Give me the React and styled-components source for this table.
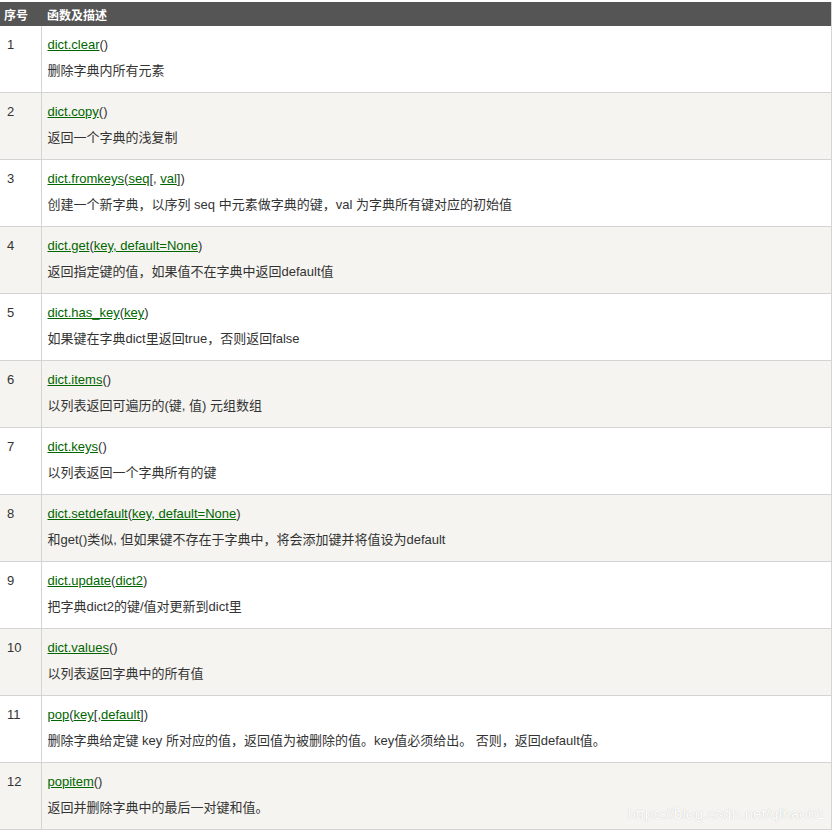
import React from 'react';
import styled, { createGlobalStyle } from 'styled-components';

const GlobalStyle = createGlobalStyle`
  html, body {
    margin: 0;
    padding: 0;
    background: #fff;
  }
  body {
    font-family: Arial, "Liberation Sans", "Noto Sans CJK SC", sans-serif;
  }
`;

const Page = styled.div`
  position: relative;
  width: 833px;
  padding-top: 2px;
`;

const Table = styled.table`
  width: 832px;
  border-collapse: collapse;
  table-layout: fixed;
  font-size: 13px;
  color: #333;
  border-right: 1px solid #d4d4d4;
`;

const HeadCell = styled.th`
  height: 24px;
  padding: 0 4px;
  background: #555;
  color: #fff;
  font-size: 12px;
  font-weight: bold;
  text-align: left;
  width: ${props => (props.narrow ? '33px' : 'auto')};
  ${props => !props.narrow && 'padding-left: 6px;'}
`;

const Row = styled.tr`
  background: ${props => (props.shaded ? '#f5f4f0' : '#fff')};
  border-bottom: 1px solid #d4d4d4;
`;

const NumCell = styled.td`
  vertical-align: top;
  padding: 6px 6px 8px 7px;
  line-height: 26px;
  border-right: 1px solid #d4d4d4;
`;

const DescCell = styled.td`
  vertical-align: top;
  padding: 6px 6px 8px 6px;
  line-height: 26px;
`;

const Signature = styled.div`
  white-space: nowrap;
`;

const FnLink = styled.a`
  color: #006600;
  text-decoration: underline;
`;

const Description = styled.div``;

const Watermark = styled.div`
  position: absolute;
  right: 8px;
  bottom: 8px;
  font-family: Arial, "Liberation Sans", sans-serif;
  font-size: 15px;
  color: #fff;
  text-shadow: 0 0 1px rgba(0, 0, 0, 0.25);
  letter-spacing: 0.2px;
`;

// parts: [text, isLink]
const rows = [
  { sig: [['dict.clear', 1], ['()', 0]], desc: '删除字典内所有元素' },
  { sig: [['dict.copy', 1], ['()', 0]], desc: '返回一个字典的浅复制' },
  {
    sig: [['dict.fromkeys', 1], ['(', 0], ['seq', 1], ['[, ', 0], ['val', 1], ['])', 0]],
    desc: '创建一个新字典，以序列 seq 中元素做字典的键，val 为字典所有键对应的初始值',
  },
  {
    sig: [['dict.get', 1], ['(', 0], ['key, default=None', 1], [')', 0]],
    desc: '返回指定键的值，如果值不在字典中返回default值',
  },
  {
    sig: [['dict.has_key', 1], ['(', 0], ['key', 1], [')', 0]],
    desc: '如果键在字典dict里返回true，否则返回false',
  },
  { sig: [['dict.items', 1], ['()', 0]], desc: '以列表返回可遍历的(键, 值) 元组数组' },
  { sig: [['dict.keys', 1], ['()', 0]], desc: '以列表返回一个字典所有的键' },
  {
    sig: [['dict.setdefault', 1], ['(', 0], ['key, default=None', 1], [')', 0]],
    desc: '和get()类似, 但如果键不存在于字典中，将会添加键并将值设为default',
  },
  {
    sig: [['dict.update', 1], ['(', 0], ['dict2', 1], [')', 0]],
    desc: '把字典dict2的键/值对更新到dict里',
  },
  { sig: [['dict.values', 1], ['()', 0]], desc: '以列表返回字典中的所有值' },
  {
    sig: [['pop', 1], ['(', 0], ['key', 1], ['[,', 0], ['default', 1], ['])', 0]],
    desc: '删除字典给定键 key 所对应的值，返回值为被删除的值。key值必须给出。 否则，返回default值。',
  },
  { sig: [['popitem', 1], ['()', 0]], desc: '返回并删除字典中的最后一对键和值。' },
];

export default function App() {
  return (
    <>
      <GlobalStyle />
      <Page>
        <Table>
          <thead>
            <tr>
              <HeadCell narrow>序号</HeadCell>
              <HeadCell>函数及描述</HeadCell>
            </tr>
          </thead>
          <tbody>
            {rows.map((row, i) => (
              <Row key={i} shaded={i % 2 === 1}>
                <NumCell>{i + 1}</NumCell>
                <DescCell>
                  <Signature>
                    {row.sig.map(([text, link], j) =>
                      link ? <FnLink key={j}>{text}</FnLink> : <span key={j}>{text}</span>
                    )}
                  </Signature>
                  <Description>{row.desc}</Description>
                </DescCell>
              </Row>
            ))}
          </tbody>
        </Table>
        <Watermark>https://blog.csdn.net/qihao01</Watermark>
      </Page>
    </>
  );
}
